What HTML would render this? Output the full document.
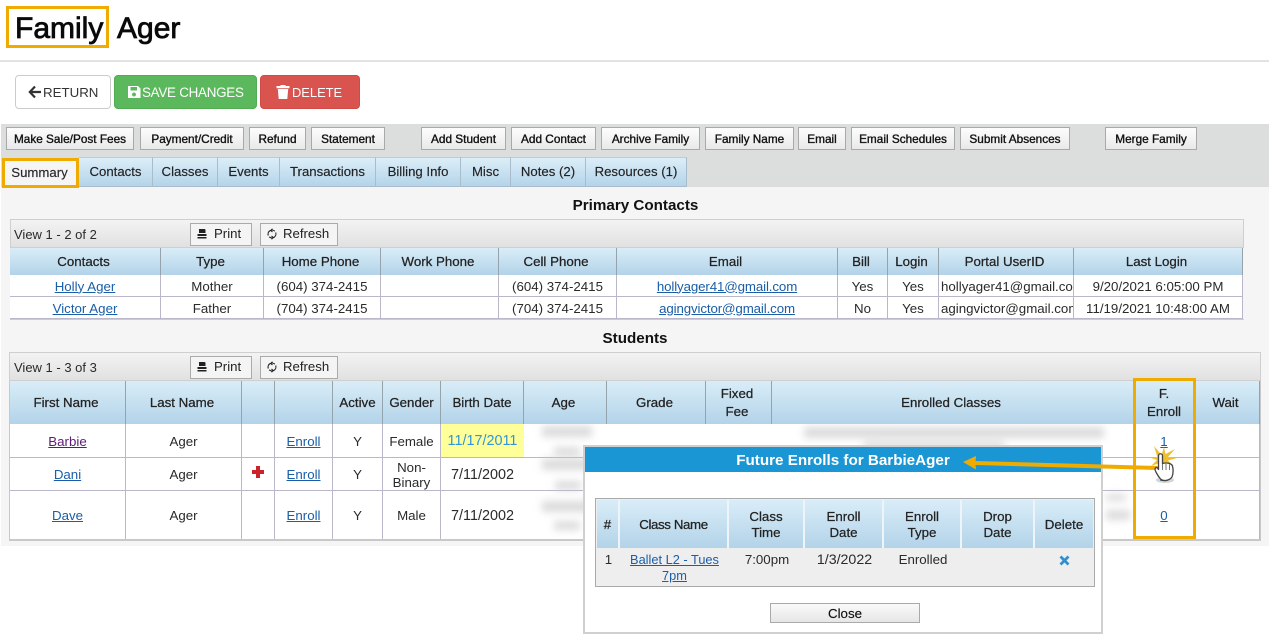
<!DOCTYPE html>
<html><head><meta charset="utf-8"><title>Family Ager</title>
<style>
*{box-sizing:border-box}
html,body{margin:0;padding:0;width:1269px;height:634px;overflow:hidden;background:#fff;font-family:"Liberation Sans",sans-serif;font-size:13.3px;color:#2a2a2a}
.a{position:absolute}
.t{position:absolute;white-space:nowrap}
.btn{position:absolute;top:75px;height:34px;border-radius:4px;font-size:13.3px;line-height:33px;white-space:nowrap;border:1px solid}
.tb{position:absolute;top:127px;height:23px;background:linear-gradient(#fdfdfd,#e9e9e9);border:1px solid #a9a9a9;font-size:11.8px;line-height:22px;text-align:center;color:#111;white-space:nowrap;-webkit-text-stroke:.35px #111}
.tab{position:absolute;top:157px;height:30px;background:linear-gradient(#dceef8,#b4d4ea);border-right:1px solid #a9bccb;border-top:1px solid #bccbd6;border-bottom:1px solid #a9bccb;font-size:13.2px;line-height:28px;text-align:center;color:#222;white-space:nowrap;-webkit-text-stroke:.15px #222}
.bar{position:absolute;background:linear-gradient(#f3f3f3,#e1e1e1);border:1px solid #cfcfcf}
.pb{position:absolute;height:23px;background:#f4f4f4;border:1px solid #aaa;font-size:13.2px;line-height:19px;color:#222}
.pb svg{position:absolute;left:5px;top:4px}
.pb span{position:absolute;white-space:nowrap}
table{position:absolute;border-collapse:separate;border-spacing:0;table-layout:fixed;background:#fff}
th{font-weight:normal;background:linear-gradient(#d9edf8,#b3d3e9);border-right:1px solid #95a3ad;padding:1px 3px 0 0;text-align:center;color:#222;line-height:18px;-webkit-text-stroke:.25px #222;overflow:hidden}
td{border-right:1px solid #b9b7c9;border-bottom:1px solid #b9b7c9;padding:1px 0 0;text-align:center;white-space:nowrap;overflow:hidden}
a{color:#1a5ea8;text-decoration:underline}
.d{font-size:14.4px}
.bl{position:absolute;background:#c4c4c4;filter:blur(4px);opacity:.6}
.m th{border-right:2px solid #eef5fa;line-height:16px;padding:2px 0 0}
.m td{background:#eee;border:0;vertical-align:top;padding-top:4px;line-height:16px;white-space:normal}
.nb{border-right:0}
</style></head><body>

<div class="t" style="left:15px;top:11px;font-size:30px;line-height:36px;color:#0a0a0a;-webkit-text-stroke:.8px #0a0a0a">Family</div>
<div class="t" style="left:117px;top:11px;font-size:30px;line-height:36px;color:#0a0a0a;-webkit-text-stroke:.8px #0a0a0a">Ager</div>
<div class="a" style="left:6px;top:6px;width:103px;height:42px;border:3px solid #f0ab00"></div>
<div class="a" style="left:0;top:60px;width:1269px;height:2px;background:#e2e2e2"></div>

<div class="btn" style="left:15px;width:96px;background:#fff;border-color:#ccc;color:#333">
<svg class="a" style="left:12px;top:9px" width="14" height="14" viewBox="0 0 14 14"><path d="M7 1.500 1.800 7 7 12.500M2 7H13" fill="none" stroke="#333" stroke-width="2.200"/></svg>
<span class="t" style="left:27px">RETURN</span></div>
<div class="btn" style="left:114px;width:143px;background:#5cb85c;border-color:#52ad52;color:#fff">
<svg class="a" style="left:12px;top:9px" width="14" height="14" viewBox="0 0 14 14"><path d="M1 1H11L13.500 3.500V13H1ZM3.500 2V5.500H10V2ZM7 7.500A2 2 0 1 0 7.010 7.500Z" fill="#fff" fill-rule="evenodd"/></svg>
<span class="t" style="left:27px;letter-spacing:-.25px;font-size:13.400px">SAVE CHANGES</span></div>
<div class="btn" style="left:260px;width:100px;background:#d9534f;border-color:#d04a46;color:#fff">
<svg class="a" style="left:15px;top:8px" width="14" height="16" viewBox="0 0 14 16"><path d="M4.500 1H9.500V2H13.500V4.300H.5V2H4.500ZM1.800 5H12.200L11.300 15H2.700Z" fill="#fff"/></svg>
<span class="t" style="left:31px;font-size:12.900px">DELETE</span></div>

<div class="a" style="left:1px;top:124px;width:1268px;height:63px;background:#dcdddd"></div>
<div class="tb" style="left:6px;width:128px">Make Sale/Post Fees</div>
<div class="tb" style="left:140px;width:104px">Payment/Credit</div>
<div class="tb" style="left:249px;width:57px">Refund</div>
<div class="tb" style="left:311px;width:74px">Statement</div>
<div class="tb" style="left:421px;width:85px">Add Student</div>
<div class="tb" style="left:511px;width:85px">Add Contact</div>
<div class="tb" style="left:601px;width:99px">Archive Family</div>
<div class="tb" style="left:705px;width:89px">Family Name</div>
<div class="tb" style="left:798px;width:48px">Email</div>
<div class="tb" style="left:851px;width:104px">Email Schedules</div>
<div class="tb" style="left:960px;width:110px">Submit Absences</div>
<div class="tb" style="left:1105px;width:92px">Merge Family</div>

<div class="tab" style="left:79px;width:74px">Contacts</div>
<div class="tab" style="left:153px;width:65px">Classes</div>
<div class="tab" style="left:218px;width:62px">Events</div>
<div class="tab" style="left:280px;width:96px">Transactions</div>
<div class="tab" style="left:376px;width:85px">Billing Info</div>
<div class="tab" style="left:461px;width:50px">Misc</div>
<div class="tab" style="left:511px;width:75px">Notes (2)</div>
<div class="tab" style="left:586px;width:101px">Resources (1)</div>

<div class="a" style="left:1px;top:187px;width:1268px;height:359px;background:#f5f5f5"></div>
<div class="a" style="left:2px;top:158px;width:77px;height:30px;background:#f5f5f5;border:3px solid #f0ab00;font-size:13.200px;line-height:24px;text-align:center;padding-right:2px;-webkit-text-stroke:.15px #222">Summary</div>

<div class="t" style="left:0;width:1271px;text-align:center;top:197px;font-size:15.200px;font-weight:bold;line-height:18px;color:#111">Primary Contacts</div>
<div class="bar" style="left:10px;top:219px;width:1234px;height:29px"></div>
<div class="t" style="left:14px;top:227px;line-height:16px;font-size:13px">View 1 - 2 of 2</div>
<div class="pb" style="left:190px;top:223px;width:62px"><svg width="12" height="12" viewBox="0 0 12 12"><path d="M3.500 1H8.500C9 1 9.500 1.500 9.500 2V5H3V2C2.500 1.500 3 1 3.500 1ZM1.500 6H10.500V8H1.500ZM1.500 9H10.500V10.500H1.500Z" fill="#222"/></svg><span style="left:23px">Print</span></div>
<div class="pb" style="left:260px;top:223px;width:78px"><svg width="12" height="12" viewBox="0 0 12 12"><path d="M8.800 3.200A4 4 0 0 0 2.300 7.500M3.200 8.800A4 4 0 0 0 9.700 4.500M6.500 .8 4.800 2.500 6.500 4M5.500 11.200 7.200 9.500 5.500 8" fill="none" stroke="#222" stroke-width="1.100"/></svg><span style="left:22px">Refresh</span></div>

<table style="left:10px;top:248px;width:1233px">
<colgroup><col style="width:151px"><col style="width:103px"><col style="width:117px"><col style="width:118px"><col style="width:118px"><col style="width:221px"><col style="width:50px"><col style="width:51px"><col style="width:135px"><col style="width:169px"></colgroup>
<tr style="height:27px"><th>Contacts</th><th>Type</th><th>Home Phone</th><th>Work Phone</th><th>Cell Phone</th><th>Email</th><th>Bill</th><th>Login</th><th>Portal UserID</th><th>Last Login</th></tr>
<tr style="height:22px"><td><a>Holly Ager</a></td><td>Mother</td><td>(604) 374-2415</td><td></td><td>(604) 374-2415</td><td><a style="letter-spacing:-.12px">hollyager41@gmail.com</a></td><td>Yes</td><td>Yes</td><td style="text-align:left;padding-left:2px">hollyager41@gmail.com</td><td>9/20/2021 6:05:00 PM</td></tr>
<tr style="height:22px"><td><a>Victor Ager</a></td><td>Father</td><td>(704) 374-2415</td><td></td><td>(704) 374-2415</td><td><a style="letter-spacing:-.12px">agingvictor@gmail.com</a></td><td>No</td><td>Yes</td><td style="text-align:left;padding-left:2px">agingvictor@gmail.com</td><td>11/19/2021 10:48:00 AM</td></tr>
</table>
<div class="a" style="left:10px;top:319px;width:1234px;height:1px;background:#ccc"></div>

<div class="t" style="left:0;width:1270px;text-align:center;top:330px;font-size:15.200px;font-weight:bold;line-height:18px;color:#111">Students</div>
<div class="bar" style="left:9px;top:352px;width:1252px;height:29px"></div>
<div class="t" style="left:14px;top:360px;line-height:16px;font-size:13px">View 1 - 3 of 3</div>
<div class="pb" style="left:190px;top:356px;width:62px"><svg width="12" height="12" viewBox="0 0 12 12"><path d="M3.500 1H8.500C9 1 9.500 1.500 9.500 2V5H3V2C2.500 1.500 3 1 3.500 1ZM1.500 6H10.500V8H1.500ZM1.500 9H10.500V10.500H1.500Z" fill="#222"/></svg><span style="left:23px">Print</span></div>
<div class="pb" style="left:260px;top:356px;width:78px"><svg width="12" height="12" viewBox="0 0 12 12"><path d="M8.800 3.200A4 4 0 0 0 2.300 7.500M3.200 8.800A4 4 0 0 0 9.700 4.500M6.500 .8 4.800 2.500 6.500 4M5.500 11.200 7.200 9.500 5.500 8" fill="none" stroke="#222" stroke-width="1.100"/></svg><span style="left:22px">Refresh</span></div>

<table style="left:10px;top:381px;width:1250px">
<colgroup><col style="width:116px"><col style="width:116px"><col style="width:33px"><col style="width:58px"><col style="width:50px"><col style="width:58px"><col style="width:83px"><col style="width:83px"><col style="width:99px"><col style="width:66px"><col style="width:362px"><col style="width:61px"><col style="width:65px"></colgroup>
<tr style="height:43px"><th>First Name</th><th>Last Name</th><th></th><th></th><th style="padding-right:0">Active</th><th style="padding-right:0">Gender</th><th style="padding-right:0">Birth Date</th><th>Age</th><th>Grade</th><th>Fixed<br>Fee</th><th>Enrolled Classes</th><th style="padding-right:0">F.<br>Enroll</th><th>Wait</th></tr>
<tr style="height:34px"><td><a style="color:#5d1a78">Barbie</a></td><td>Ager</td><td></td><td><a>Enroll</a></td><td>Y</td><td>Female</td><td class="d nb" style="background:#ffff99;color:#2f96d8">11/17/2011</td><td class="nb"></td><td class="nb"></td><td class="nb"></td><td class="nb"></td><td><a>1</a></td><td></td></tr>
<tr style="height:33px"><td><a>Dani</a></td><td>Ager</td><td></td><td><a>Enroll</a></td><td>Y</td><td style="line-height:15px">Non-<br>Binary</td><td class="d nb">7/11/2002</td><td class="nb"></td><td class="nb"></td><td class="nb"></td><td class="nb"></td><td><a>2</a></td><td></td></tr>
<tr style="height:49px"><td><a>Dave</a></td><td>Ager</td><td></td><td><a>Enroll</a></td><td>Y</td><td>Male</td><td class="d nb">7/11/2002</td><td class="nb"></td><td class="nb"></td><td class="nb"></td><td class="nb"></td><td><a>0</a></td><td></td></tr>
</table>
<div class="a" style="left:9px;top:381px;width:1px;height:159px;background:#c8c8c8"></div>
<div class="a" style="left:9px;top:539px;width:1252px;height:2px;background:#c8c8c8"></div>
<div class="a" style="left:1260px;top:381px;width:1px;height:159px;background:#c8c8c8"></div>

<svg class="a" style="left:252px;top:466px" width="12" height="12" viewBox="0 0 12 12"><path d="M4 0H8V4H12V8H8V12H4V8H0V4H4Z" fill="#cc2229"/></svg>

<div class="a" style="left:524px;top:424px;width:610px;height:115px;overflow:hidden">
<div class="bl" style="left:18px;top:2px;width:50px;height:11px"></div><div class="bl" style="left:30px;top:23px;width:26px;height:9px"></div>
<div class="bl" style="left:18px;top:35px;width:50px;height:11px"></div><div class="bl" style="left:31px;top:57px;width:26px;height:9px"></div>
<div class="bl" style="left:18px;top:77px;width:50px;height:11px"></div><div class="bl" style="left:30px;top:97px;width:26px;height:9px"></div>
<div class="bl" style="left:280px;top:3px;width:300px;height:11px"></div><div class="bl" style="left:340px;top:17px;width:140px;height:7px"></div>
<div class="bl" style="left:582px;top:70px;width:20px;height:7px"></div><div class="bl" style="left:582px;top:86px;width:24px;height:10px"></div>
</div>

<div class="a" style="left:1133px;top:378px;width:63px;height:161px;border:3px solid #f0ab00"></div>

<div class="a" style="left:583px;top:445px;width:520px;height:189px;background:#fff;border:2px solid #d0d0d0">
<div class="a" style="left:0;top:0;width:516px;height:25px;background:#1b96d5;color:#fff;font-size:15.200px;font-weight:bold;line-height:27px;text-align:center">Future Enrolls for BarbieAger</div>
</div>
<div class="a" style="left:595px;top:498px;width:500px;height:89px;border:1px solid #aaa;background:#eee"></div>
<table class="m" style="left:597px;top:500px;width:496px;background:#eee">
<colgroup><col style="width:23px"><col style="width:109px"><col style="width:76px"><col style="width:79px"><col style="width:78px"><col style="width:73px"><col style="width:58px"></colgroup>
<tr style="height:48px"><th>#</th><th><span style="letter-spacing:-.4px">Class Name</span></th><th>Class<br>Time</th><th>Enroll<br>Date</th><th>Enroll<br>Type</th><th>Drop<br>Date</th><th style="border:0">Delete</th></tr>
<tr style="height:37px"><td>1</td><td><a style="font-size:12.800px">Ballet L2 - Tues<br>7pm</a></td><td>7:00pm</td><td style="font-size:14.200px">1/3/2022</td><td>Enrolled</td><td></td><td><svg width="11" height="11" viewBox="0 0 11 11" style="margin-top:3px"><path d="M1.500 1.500 9.500 9.500M9.500 1.500 1.500 9.500" stroke="#2f8fd0" stroke-width="2.800"/></svg></td></tr>
</table>
<div class="a" style="left:770px;top:603px;width:150px;height:20px;background:linear-gradient(#fafafa,#e6e6e6);border:1px solid #aaa;text-align:center;line-height:19px;color:#111;-webkit-text-stroke:.15px #111">Close</div>

<svg class="a" style="left:955px;top:440px" width="240" height="50" viewBox="955 440 240 50">
<path d="M963 462 976 456 975.500 461 1158 466 1158 470 975.500 465 976 469.500Z" fill="#f0ab00"/>
<path d="M1154 446 1161.500 455 1164 447 1165.500 454 1175 449 1168 457 1177 458 1168 460.500 1174 466 1166 463.500 1160 470 1160 463 1151 466 1157 460 1151 458 1157.500 457.500Z" fill="#eec02f"/>
<ellipse cx="1165" cy="480" rx="9" ry="3" fill="#888" opacity=".35"/>
<path d="M1158.500 456C1158.500 453 1162.500 453 1162.500 456V463.500C1166 462.500 1170 463 1172 465 1173.500 468 1173.500 473 1172 477 1169 481 1163 481.500 1160.500 479 1158 476 1155 471 1155 469C1155.500 466.500 1157.500 467.500 1158.500 469.500Z" fill="#fff" stroke="#444" stroke-width="1.300" stroke-linejoin="round"/>
<path d="M1162.500 464V470M1166 464V470M1169.500 464.500V470" stroke="#666" stroke-width=".9"/>
</svg>
</body></html>
